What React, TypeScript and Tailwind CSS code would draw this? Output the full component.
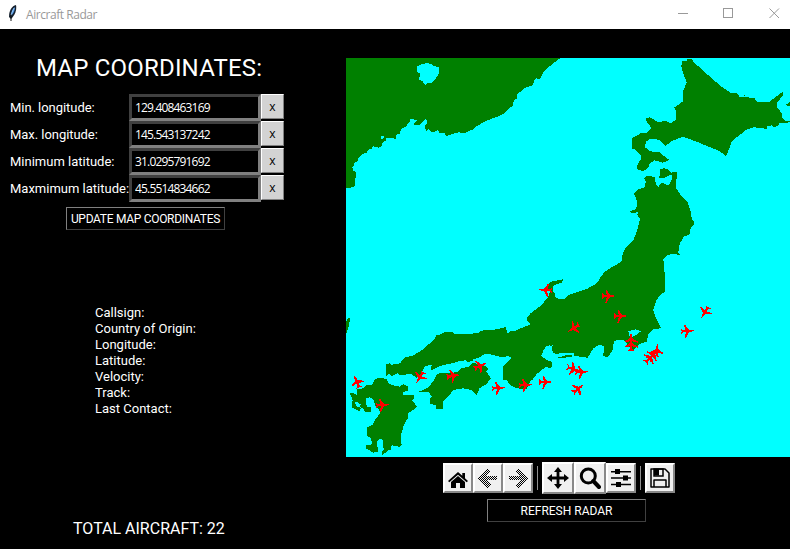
import { useState } from "react";

const ui = 'font-["Roboto","Liberation_Sans",sans-serif]';

const planes: [number, number, number][] = [
  [546, 290, 185], [608, 296, 0], [620, 316, 0], [574, 328, 148], [705, 312, 122],
  [687, 331, -5], [631, 340, -90], [631, 345, -90], [657, 351, -85], [650, 358, -45],
  [653, 355, -45], [573, 369, 15], [581, 372, -5], [578, 389, -38], [545, 382, 0],
  [525, 385, -5], [498, 388, -5], [480, 366, -25], [453, 376, -10], [420, 377, 122],
  [357, 382, -112], [382, 405, -5],
];

function RadarMap() {
  return (
    <svg viewBox="346 58 444 399" className="block h-[399px] w-[444px] bg-[#00ffff]" shapeRendering="crispEdges">
      <g fill="#008000">
        <g transform="translate(340 50) scale(.33333)">
          <path d="M18 24H662L652 30L640 40L625 52L610 66L603 82L598 88L588 85L583 92L578 106L558 112L545 122L532 132L530 147L522 150L518 168L505 177L492 190L470 201L450 208L430 217L404 232L400 238L388 242L375 249L355 247L335 252L318 260L314 250L298 248L293 240L285 245L275 245L266 238L257 245L256 226L263 216L257 208L236 226L219 226L230 211L213 205L207 218L196 231L182 238L181 250L169 254L168 269L160 263L137 264V272L128 278L124 290L117 293L100 289L95 296L83 300L81 309L70 311L55 325L53 334L44 337L42 346L37 350L38 360L47 367V378L45 405L40 411L25 415H18Z" />
          <path fill="#00ffff" d="M245 43L260 39L275 42L282 48L298 53V68L286 88L275 98L264 99L255 105L249 95L235 88L240 78V70L232 66V48ZM123 258H132V264H128V267H123Z" />
        </g>
        <g transform="translate(600 50) scale(.33333)">
          <path d="M246 32L258 34L262 28H275L285 40L310 62L335 85L362 108L395 130H412L418 140L445 142L450 145L462 143L470 155L508 156L525 142L550 124V134L540 147L530 160V170L545 190L547 203L555 212H570V217L538 220L535 228L520 232L516 226L503 228L500 236L480 235L462 231L438 240L410 262L394 278L384 305L377 319L372 312L350 299L320 288L290 275L250 261L235 265L215 274L197 287L180 272L168 267H150L138 275L135 292L152 304L180 307L192 318L208 330L188 338L164 331L148 342L145 354L127 364L112 357V345L124 325L122 315L108 300L96 295V264L110 258L125 248L140 250L155 234L140 215L138 206L150 202L172 215L200 214L212 220L227 210L228 182L222 173L248 155L249 125L260 98L250 70L244 50ZM570 156L557 165L570 170ZM432 135H436V139H432Z" />
        </g>
        <g transform="translate(600 150) scale(.33333)">
          <path d="M136 80L150 78L164 82L168 103L175 111L185 98L207 107L215 88L217 73L205 77L193 84H178L181 58L192 55L207 60L215 69L220 66L230 65L229 115L240 132L262 155L272 185L276 210L281 212V226L272 232L270 252L252 260L240 280L236 290L237 302L232 304L240 317L228 312L205 313L190 325V345L195 380L194 425L175 440L165 455H0V383L15 365L40 350L66 333L68 312L76 295L100 270L112 240L120 207L112 195L115 186L97 190L87 183L105 180L111 170L110 150L102 130L115 118L133 112L138 95L133 86Z" />
        </g>
        <g transform="translate(500 250) scale(.33333)">
          <path d="M372 0H530L540 15L520 12L500 15L490 28L495 80L494 125L480 135L470 150L460 180L468 205L483 235L460 237L445 252L440 275L420 282L400 300L385 290L378 275L370 270L342 272L338 300L322 323L310 318L312 290L300 283L280 295L263 323L225 318L190 324L165 325L205 314L222 318V310L195 308L166 312L155 305L158 286L145 290L133 307L125 320L130 330L155 345L152 353L135 352L110 372L97 390H8L10 350L35 325L30 318L0 322V236L18 232L22 250L35 242L50 252L75 248L88 232L90 220L80 210L82 201L92 190L125 165L145 140L150 125L140 105L155 95L188 88L187 97L160 107L158 125L165 130V140L175 147H192L205 135L260 117L290 100L310 70L330 55L366 34Z" />
          <path fill="#00ffff" d="M385 244L408 238L423 244L408 255L390 265Z" />
        </g>
        <g transform="translate(480 310) scale(.33333)">
          <path d="M0 62L40 60L75 52L80 60L82 72L98 65L160 40V120L185 140L215 155V172L195 168L175 185L155 205L145 225L140 237L110 235L90 225L80 210L68 205L75 190L68 175L92 155L95 140L60 138L30 132H0Z" />
          <path fill="#00ffff" d="M184 138L190 122L198 110L211 105L212 118L218 122L222 133L252 129L252 135L230 143L215 156L198 148Z" />
        </g>
        <g transform="translate(340 310) scale(.33333)">
          <path d="M138 163L150 160L155 164L180 160L195 142L215 138L240 125L265 104L285 85L288 76L300 74L315 65H335L345 73L410 70L440 60L480 58V140L440 130L415 143L395 150L365 152L335 160L300 168L275 180L272 188L275 165L255 168L245 190L230 205L215 192L180 195L172 190L155 198L147 192L138 198Z" />
          <path d="M105 208L120 203L140 207L145 220L155 225L180 230L190 222L205 230V242L188 246V254L222 255V268L215 270L232 290L215 303L203 310V325L194 340L190 350L182 380L185 405L178 410L157 406L152 412L155 421L145 420L125 438V425L131 419L128 390L120 385L110 397L115 425L100 428L76 414L80 405L97 403L93 386L80 375L82 352L97 345L105 330L120 310L118 300L105 285L100 268L90 262L77 265L80 290L92 292V305L75 305L70 295L60 292L62 283L48 274L45 280L50 290L62 293L60 305L35 292L38 270L30 250L38 248L50 255L52 238L70 235L78 225H95Z" />
          <path d="M233 246L250 240L268 230L285 205L290 193L302 188L330 190L355 185L365 175L385 170L400 158L440 170L445 180L438 182L452 205L440 222L418 235L410 257L395 240L370 235L340 240L325 260L310 275L308 296H288V287L270 280V268L275 260L265 245ZM18 38L23 25H30L28 42L20 70H18ZM375 150L383 157L399 151L394 147Z" />
        </g>
      </g>
      {planes.map(([x, y, r], i) => (
        <path
          key={i}
          transform={`translate(${x} ${y}) rotate(${r})`}
          fill="#ff0000"
          d="M7 0L4-1.1H2L-1.4-6.5H-2.6L-1.4-1.1H-4L-5.5-3H-6.5L-5.5 0L-6.5 3H-5.5L-4 1.1H-1.4L-2.6 6.5H-1.4L2 1.1H4Z"
        />
      ))}
    </svg>
  );
}

function CoordinateRow({ label, initial, tracking }: { label: string; initial: string; tracking: string }) {
  const [value, setValue] = useState(initial);
  return (
    <div className="flex h-[27px]">
      <label className={`w-[119px] shrink-0 whitespace-nowrap text-[13px] leading-[27px] ${tracking}`}>{label}</label>
      <input
        value={value}
        onChange={(e) => setValue(e.target.value)}
        className='h-[27px] w-[132px] border-[3px] border-t-[#404040] border-r-[#808080] border-b-[#808080] border-l-[#404040] bg-black pl-[3px] font-["Open_Sans","Noto_Sans",sans-serif] text-[12px] tracking-[-0.83px] text-white outline-none'
      />
      <button
        onClick={() => setValue("")}
        className='h-[25px] w-[23px] border border-t-white border-r-[#808080] border-b-[#808080] border-l-white bg-[#d3d3d3] font-["Open_Sans",sans-serif] text-[12px] leading-[22px] text-black'
      >
        x
      </button>
    </div>
  );
}

const toolBase =
  "flex items-center justify-center border-2 border-t-white border-r-[#888] border-b-[#888] border-l-white bg-[#f0f0f0] text-black";

function Arrow({ flip = false }: { flip?: boolean }) {
  return (
    <svg viewBox="0 0 20 20" className={flip ? "h-5 w-5 -scale-x-100" : "h-5 w-5"} shapeRendering="crispEdges">
      <defs>
        <pattern id="stipple" width="2" height="2" patternUnits="userSpaceOnUse">
          <path d="M0 0h1v1H0zM1 1h1v1H1z" fill="#000" />
        </pattern>
      </defs>
      <path fill="url(#stipple)" d="M0 10L9 0L13 3L8 8H19V12H8L13 17L9 20Z" />
    </svg>
  );
}

function Toolbar() {
  return (
    <div className="ml-[97px] flex h-8 items-center">
      <button className={`${toolBase} h-[30px] w-[30px]`}>
        <svg viewBox="0 0 20 18" className="mt-1 h-[18px] w-5">
          <path d="M10 1L0 10L1.3 11.3L10 3.7L18.7 11.3L20 10L17 7.3V2H14.3V4.8ZM10 5L3 11V17H8V12H12V17H17V11Z" />
        </svg>
      </button>
      <button className={`${toolBase} h-[30px] w-[30px]`}><Arrow /></button>
      <button className={`${toolBase} h-[30px] w-[30px]`}><Arrow flip /></button>
      <div className="mr-1 ml-1 h-6 w-px bg-[#909090]" />
      <button className={`${toolBase} h-[32px] w-[32px]`}>
        <svg viewBox="0 0 22 22" className="h-[22px] w-[22px]">
          <path d="M11 0L15 5H12.4V9.6H17V7L22 11L17 15V12.4H12.4V17H15L11 22L7 17H9.6V12.4H5V15L0 11L5 7V9.6H9.6V5H7Z" />
        </svg>
      </button>
      <button className={`${toolBase} h-[32px] w-[32px]`}>
        <svg viewBox="0 0 22 22" className="h-[22px] w-[22px]" fill="none" stroke="currentColor">
          <circle cx="9.3" cy="9" r="7" strokeWidth="3" />
          <path d="M14.3 14L20 20" strokeWidth="4" strokeLinecap="round" />
        </svg>
      </button>
      <button className={`${toolBase} h-[30px] w-[30px]`}>
        <svg viewBox="0 0 20 20" className="h-5 w-5">
          <path d="M0 3H20V4.5H0ZM0 9.3H20V10.8H0ZM0 15.7H20V17.2H0ZM4 1H9V6H4ZM12 7.5H17V12.5H12ZM5 14H10V19H5Z" />
        </svg>
      </button>
      <div className="mr-1 ml-1 h-6 w-px bg-[#909090]" />
      <button className={`${toolBase} h-[30px] w-[30px]`}>
        <svg viewBox="0 0 20 20" className="h-5 w-5" fill="none" stroke="currentColor" strokeWidth="1.5">
          <path d="M1 1H15L19 5V19H1ZM4 19V12H16V19" strokeLinejoin="round" />
          <path d="M4 1H13V8H4Z" />
          <path d="M4 1H9V7.5H4Z" fill="currentColor" stroke="none" />
        </svg>
      </button>
    </div>
  );
}

const flatButton =
  "h-[23px] w-[159px] border border-t-[#808080] border-r-[#404040] border-b-[#404040] border-l-[#808080] bg-black text-[12px] leading-[22px] whitespace-nowrap text-white";

export default function App() {
  return (
    <div className={`h-[549px] w-[790px] overflow-hidden bg-black text-white ${ui}`}>
      <header className="flex h-[29px] items-center bg-white text-[#999]">
        <svg viewBox="0 0 9 17" className="mt-[-3px] ml-2 h-[17px] w-[9px]">
          <path d="M8 0C4 1 1 5 1 12L3 14C7 10 9 5 8 0Z" fill="#15202d" />
          <path d="M7 2C4 4 3 7 3 11C6 8 7 5 7 2Z" fill="#4b91dc" />
          <path d="M3 9V16" stroke="#111" />
          <path d="M6 3L3 10" stroke="#b5d5f5" strokeWidth=".7" />
        </svg>
        <span className='ml-[9px] font-["Open_Sans","Noto_Sans",sans-serif] text-[12px] leading-7 tracking-[-0.45px]'>Aircraft Radar</span>
        <svg viewBox="0 0 102 11" className="mt-[-3px] mr-[10px] ml-auto h-[11px] w-[102px]" fill="none" stroke="currentColor">
          <path d="M0 5.5H10" />
          <rect x="45.5" y="0.5" width="9" height="9" />
          <path d="M91.5 .5L101 10M101 .5L91.5 10" />
        </svg>
      </header>
      <div className="flex h-[520px]">
        <section className="flex w-[346px] flex-col">
          <h1 className="mt-[22px] ml-9 h-[34px] text-[24px] leading-[34px] tracking-[0.2px] whitespace-nowrap">MAP COORDINATES:</h1>
          <div className="mt-[9px] ml-[10px]">
            <CoordinateRow label="Min. longitude:" initial="129.408463169" tracking="tracking-[-0.05px]" />
            <CoordinateRow label="Max. longitude:" initial="145.543137242" tracking="tracking-[-0.05px]" />
            <CoordinateRow label="Minimum latitude:" initial="31.0295791692" tracking="tracking-[0px]" />
            <CoordinateRow label="Maxmimum latitude:" initial="45.5514834662" tracking="tracking-[0px]" />
          </div>
          <button className={`${flatButton} mt-[5px] ml-[66px] tracking-[-0.3px]`}>UPDATE MAP COORDINATES</button>
          <div className="mt-[75px] ml-[95px] text-[13px] leading-4">
            <p>Callsign:</p>
            <p>Country of Origin:</p>
            <p>Longitude:</p>
            <p>Latitude:</p>
            <p>Velocity:</p>
            <p>Track:</p>
            <p>Last Contact:</p>
          </div>
          <p className="mt-[101px] ml-[73px] text-[16px] leading-[22px] whitespace-nowrap">TOTAL AIRCRAFT: 22</p>
        </section>
        <section className="w-[444px] pt-[29px]">
          <RadarMap />
          <div className="pt-[5px]">
            <Toolbar />
          </div>
          <button className={`${flatButton} mt-[5px] ml-[141px] block`}>REFRESH RADAR</button>
        </section>
      </div>
    </div>
  );
}
